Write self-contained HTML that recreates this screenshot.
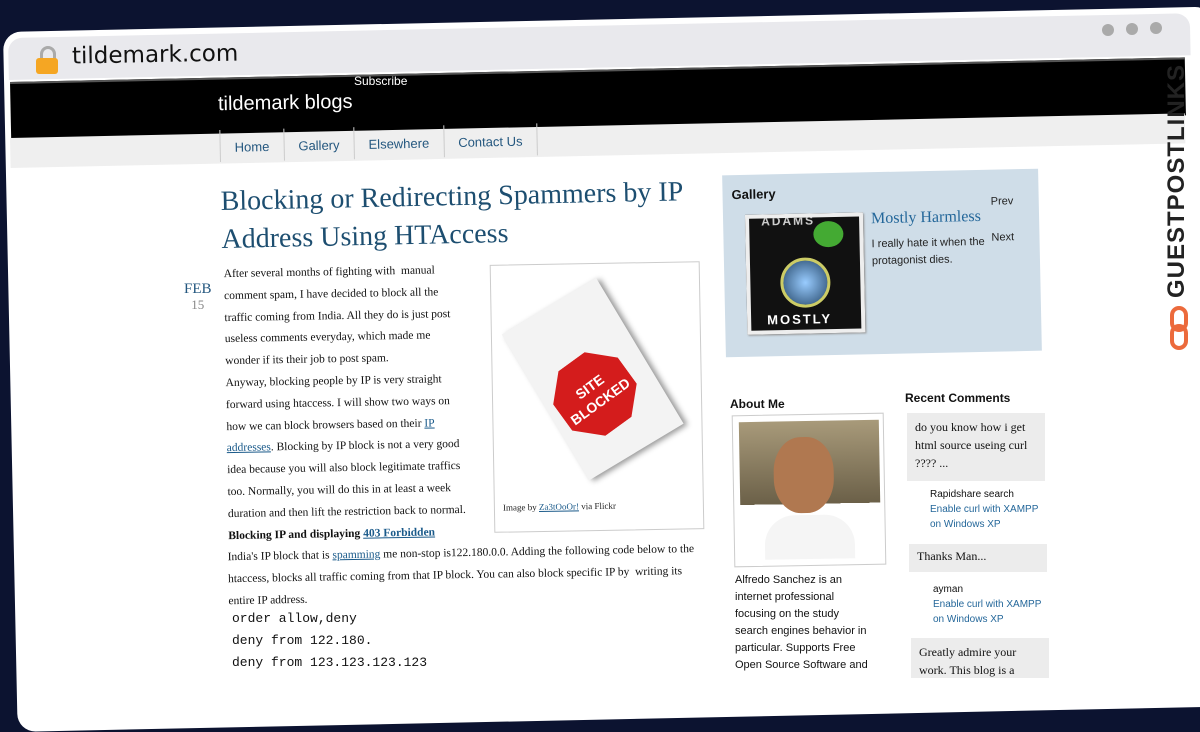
<!DOCTYPE html>
<html><head><meta charset="utf-8"><style>
body{margin:0;width:1200px;height:670px;overflow:hidden;background:#0c1330;position:relative;font-family:"Liberation Sans",sans-serif}
.a{position:absolute}
.serif{font-family:"Liberation Serif",serif}
.mono{font-family:"Liberation Mono",monospace}
a,.lk{color:#1a5a8a;text-decoration:underline}
</style></head><body>
<div class="a" style="left:3px;top:32px;width:1210px;height:700px;background:#fff;border-radius:18px;transform:rotate(-1.2deg);transform-origin:0 0"></div>
<div class="a" style="left:8px;top:38px;width:1182px;height:42px;background:#e9e9ed;border-radius:14px 14px 0 0;transform:rotate(-1.2deg);transform-origin:0 0"></div>
<div class="a" style="left:36px;top:46px;width:22px;height:26px">
<div class="a" style="left:4px;top:0;width:10px;height:12px;border:3px solid #aaa;border-bottom:none;border-radius:8px 8px 0 0"></div>
<div class="a" style="left:0;top:12px;width:22px;height:16px;background:#f5a623;border-radius:3px"></div></div>
<div class="a" style="left:72px;top:42px;font-size:23px;color:#111;font-family:'DejaVu Sans',sans-serif;transform:rotate(-1deg)">tildemark.com</div>
<div class="a" style="left:1102px;top:24px;width:12px;height:12px;border-radius:50%;background:#aaa"></div>
<div class="a" style="left:1126px;top:23px;width:12px;height:12px;border-radius:50%;background:#aaa"></div>
<div class="a" style="left:1150px;top:22px;width:12px;height:12px;border-radius:50%;background:#aaa"></div>
<div class="a" style="left:10px;top:82px;width:1175px;height:56px;background:#000;transform:rotate(-1.2deg);transform-origin:0 0;border-top:2px solid #555"></div>
<div class="a" style="left:354px;top:74px;font-size:12px;color:#fff">Subscribe</div>
<div class="a" style="left:218px;top:92px;font-size:20px;color:#fff;transform:rotate(-1deg)">tildemark blogs</div>
<div class="a" style="left:10px;top:138px;width:1175px;height:30px;background:#efefef;transform:rotate(-1.2deg);transform-origin:0 0"></div>
<div class="a" style="left:220px;top:130px;width:320px;height:32px;transform:rotate(-1.2deg);transform-origin:0 100%;font-size:13px;color:#24577f;display:flex;white-space:nowrap">
<div style="padding:10px 14px;border-left:1px solid #ccc">Home</div><div style="padding:10px 14px;border-left:1px solid #ccc">Gallery</div><div style="padding:10px 14px;border-left:1px solid #ccc">Elsewhere</div><div style="padding:10px 14px;border-left:1px solid #ccc;border-right:1px solid #ccc">Contact Us</div></div>
<div class="a serif" style="left:221px;top:178px;font-size:28px;line-height:38px;color:#1d4e70;width:480px;transform:rotate(-1.2deg)">Blocking or Redirecting Spammers by IP Address Using HTAccess</div>
<div class="a serif" style="left:184px;top:282px;font-size:15px;color:#24577f;text-align:center;line-height:15px">FEB<br><span style="font-size:13px;color:#888">15</span></div>
<div class="a serif" style="left:226px;top:262px;width:240px;font-size:11.5px;line-height:21.8px;color:#111;transform:rotate(-1deg)">After several months of fighting with &nbsp;manual comment spam, I have decided to block all the traffic coming from India. All they do is just post useless comments everyday, which made me wonder if its their job to post spam.<br>Anyway, blocking people by IP is very straight forward using htaccess. I will show two ways on how we can block browsers based on their <span class="lk">IP addresses</span>. Blocking by IP block is not a very good idea because you will also block legitimate traffics too. Normally, you will do this in at least a week duration and then lift the restriction back to normal.<br><b>Blocking IP and displaying <span class="lk">403 Forbidden</span></b></div>
<div class="a serif" style="left:228px;top:542px;width:482px;font-size:11.5px;line-height:22px;color:#111;transform:rotate(-1deg)">India's IP block that is <span class="lk">spamming</span> me non-stop is122.180.0.0. Adding the following code below to the htaccess, blocks all traffic coming from that IP block. You can also block specific IP by &nbsp;writing its entire IP address.</div>
<div class="a mono" style="left:232px;top:608px;font-size:13px;line-height:22px;color:#111">order allow,deny<br>deny from 122.180.<br>deny from 123.123.123.123</div>
<div class="a" style="left:492px;top:263px;width:208px;height:266px;border:1px solid #ccc;background:#fff;transform:rotate(-1deg);overflow:hidden">
<div class="a" style="left:45px;top:30px;width:110px;height:170px;background:#f3f3f3;transform:rotate(-30deg);box-shadow:3px 3px 6px #999"></div>
<div class="a" style="left:62px;top:90px;width:80px;height:80px;background:#d41c1c;clip-path:polygon(30% 0,70% 0,100% 30%,100% 70%,70% 100%,30% 100%,0 70%,0 30%);color:#fff;font-weight:bold;font-size:14px;text-align:center;line-height:18px;transform:rotate(-35deg)"><div style="padding-top:22px">SITE<br>BLOCKED</div></div>
<div class="a serif" style="left:8px;top:237px;font-size:9px;color:#222">Image by <span class="lk">Za3tOoOr!</span> via Flickr</div></div>
<div class="a" style="left:724px;top:172px;width:316px;height:182px;background:#cfdde8;transform:rotate(-1.2deg)">
<div class="a" style="left:9px;top:12px;font-size:13px;font-weight:bold;color:#111">Gallery</div>
<div class="a" style="left:22px;top:40px;width:110px;height:112px;background:#111;border:4px solid #eee;box-shadow:1px 1px 2px #999;overflow:hidden">
<div class="a" style="left:30px;top:40px;width:44px;height:44px;border-radius:50%;background:radial-gradient(#9cf,#246);border:3px solid #cc6"></div>
<div class="a" style="left:64px;top:4px;width:30px;height:26px;border-radius:50%;background:#4a3"></div>
<div class="a" style="left:12px;top:-4px;color:#ccc;font-weight:bold;font-size:12px;letter-spacing:2px">ADAMS</div>
<div class="a" style="left:16px;top:94px;color:#fff;font-weight:bold;font-size:13px;letter-spacing:2px">MOSTLY</div></div>
<div class="a serif" style="left:148px;top:38px;font-size:16px;color:#24679a">Mostly Harmless</div>
<div class="a" style="left:148px;top:64px;font-size:11px;line-height:17px;color:#222;width:130px">I really hate it when the protagonist dies.</div>
<div class="a" style="left:268px;top:26px;font-size:11px;color:#222">Prev</div>
<div class="a" style="left:268px;top:62px;font-size:11px;color:#222">Next</div></div>
<div class="a" style="left:730px;top:397px;font-size:12px;font-weight:bold;color:#111">About Me</div>
<div class="a" style="left:733px;top:414px;width:150px;height:150px;border:1px solid #ccc;background:#fff;transform:rotate(-1deg)">
<div class="a" style="left:6px;top:6px;width:140px;height:138px;background:linear-gradient(#a89a7a,#6b6048 60%,#fff 60%)"></div>
<div class="a" style="left:40px;top:22px;width:60px;height:76px;border-radius:45%;background:#b07850"></div>
<div class="a" style="left:30px;top:100px;width:90px;height:44px;background:#f5f5f5;border-radius:30px 30px 0 0"></div></div>
<div class="a" style="left:735px;top:572px;font-size:11px;line-height:17px;color:#111;width:140px">Alfredo Sanchez is an internet professional focusing on the study search engines behavior in particular. Supports Free Open Source Software and</div>
<div class="a" style="left:905px;top:391px;font-size:12px;font-weight:bold;color:#111">Recent Comments</div>
<div class="a serif" style="left:907px;top:413px;width:122px;padding:5px 8px;height:58px;background:#ececec;font-size:12px;line-height:18px;color:#111">do you know how i get html source useing curl ???? ...</div>
<div class="a" style="left:930px;top:487px;font-size:10px;line-height:15px;color:#111">Rapidshare search<br><span style="color:#24679a">Enable curl with XAMPP<br>on Windows XP</span></div>
<div class="a serif" style="left:909px;top:544px;width:122px;padding:5px 8px;height:18px;background:#ececec;font-size:12px;color:#111">Thanks Man...</div>
<div class="a" style="left:933px;top:582px;font-size:10px;line-height:15px;color:#111">ayman<br><span style="color:#24679a">Enable curl with XAMPP<br>on Windows XP</span></div>
<div class="a serif" style="left:911px;top:638px;width:122px;padding:5px 8px;height:30px;background:#ececec;font-size:12px;line-height:18px;color:#111">Greatly admire your work. This blog is a</div>
<div class="a" style="left:1163px;top:298px;transform:rotate(-90deg);transform-origin:0 0;font-size:24px;font-weight:bold;color:#222;letter-spacing:1px;white-space:nowrap;line-height:28px">GUESTPOSTLINKS</div>
<div class="a" style="left:1170px;top:306px;width:22px;height:44px">
<div class="a" style="left:0;top:0;width:18px;height:26px;border:4px solid #ec6a3c;border-radius:10px;box-sizing:border-box"></div>
<div class="a" style="left:0;top:18px;width:18px;height:26px;border:4px solid #ec6a3c;border-radius:10px;box-sizing:border-box"></div></div>
</body></html>
